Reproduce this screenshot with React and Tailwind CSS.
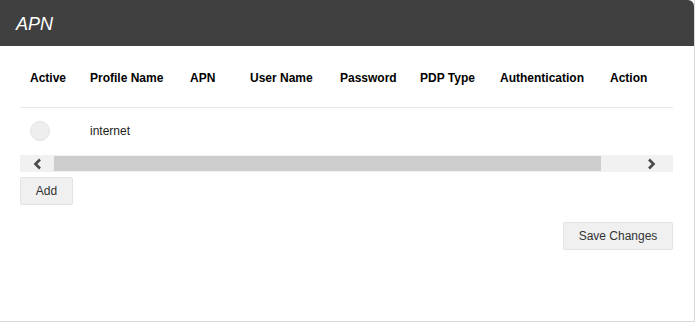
export default function App() {
  const cols = [
    { label: 'Active', w: 'w-[60px]' },
    { label: 'Profile Name', w: 'w-[100px]' },
    { label: 'APN', w: 'w-[60px]' },
    { label: 'User Name', w: 'w-[90px]' },
    { label: 'Password', w: 'w-[80px]' },
    { label: 'PDP Type', w: 'w-[80px]' },
    { label: 'Authentication', w: 'w-[110px]' },
    { label: 'Action', w: 'w-[90px]' },
  ]

  return (
    <div className="w-[696px] h-[323px] bg-white font-['Liberation_Sans',Arial,sans-serif]">
      <div className="w-[695px] h-[322px] border-r border-b border-[#d9d9d9] flex flex-col">
        <header className="h-[46px] bg-[#404040] rounded-tr-[6px] flex items-center pl-4 pt-[1px]">
          <h1 className="text-white italic text-[18px] leading-none">APN</h1>
        </header>

        <div className="px-5 pt-[2px] flex flex-col">
          <div className="overflow-hidden w-[653px]">
            <div className="flex h-[60px] items-center border-b border-[#e8e8e8] w-[760px] text-[12px] font-bold text-black">
              {cols.map((c) => (
                <div key={c.label} className={`${c.w} shrink-0 px-[10px]`}>
                  {c.label}
                </div>
              ))}
            </div>
            <div className="flex h-[46px] items-center text-[12px] text-[#222]">
              <div className="w-[60px] shrink-0 pl-[10px]">
                <div className="w-5 h-5 rounded-full bg-[#eeeeee] border border-[#e2e2e2]" />
              </div>
              <div className="w-[100px] shrink-0 px-[10px]">internet</div>
            </div>
          </div>

          {/* horizontal scrollbar */}
          <div className="mt-[1px] h-[17px] w-[653px] bg-[#f1f1f1] flex items-center">
            <div className="w-[34px] h-full flex items-center justify-center">
              <svg width="11" height="12" viewBox="0 0 11 12">
                <path d="M8 1.5 L3.5 6 L8 10.5" fill="none" stroke="#4a4a4a" strokeWidth="2.6" />
              </svg>
            </div>
            <div className="w-[547px] h-[15px] bg-[#cdcdcd]" />
            <div className="flex-1 h-full flex items-center justify-end pr-[16px]">
              <svg width="11" height="12" viewBox="0 0 11 12">
                <path d="M3 1.5 L7.5 6 L3 10.5" fill="none" stroke="#4a4a4a" strokeWidth="2.6" />
              </svg>
            </div>
          </div>

          <div className="mt-[5px]">
            <button className="h-[28px] w-[53px] bg-[#f0f0f0] border border-[#e3e3e3] rounded-[2px] text-[12px] text-[#333]">
              Add
            </button>
          </div>

          <div className="mt-[17px] flex justify-end w-[653px]">
            <button className="h-[28px] w-[110px] bg-[#f0f0f0] border border-[#e3e3e3] rounded-[2px] text-[12px] text-[#333]">
              Save Changes
            </button>
          </div>
        </div>
      </div>
    </div>
  )
}
